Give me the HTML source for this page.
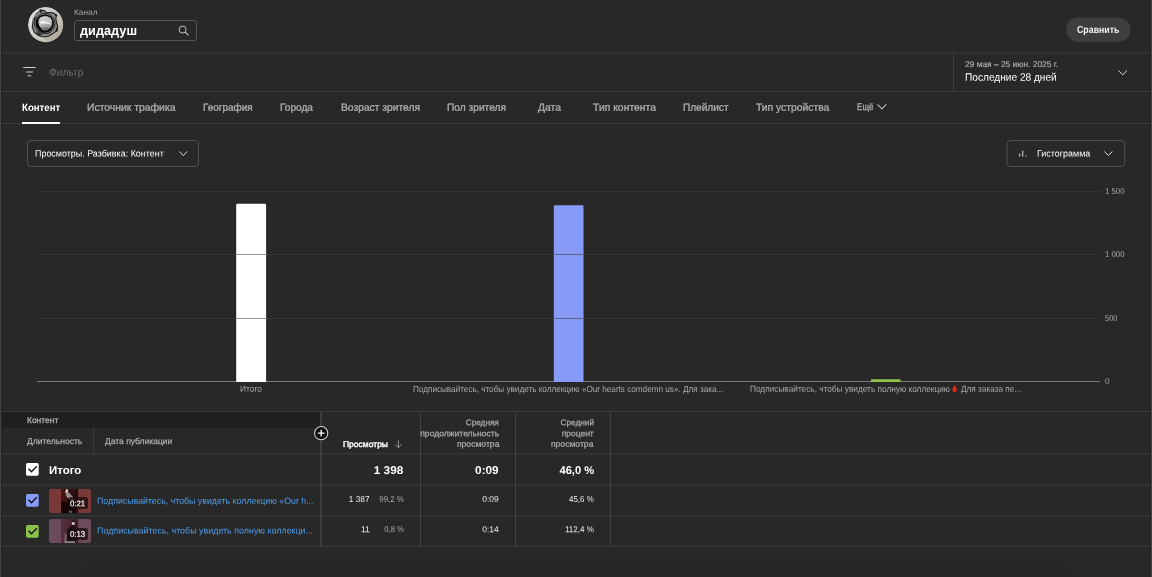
<!DOCTYPE html>
<html lang="ru">
<head>
<meta charset="utf-8">
<title>Аналитика канала</title>
<style>
html,body{margin:0;padding:0;background:#282828;}
#page{will-change:transform;position:relative;width:1152px;height:577px;overflow:hidden;background:#282828;font-family:"Liberation Sans",sans-serif;}
#page *{box-sizing:border-box;}
.t{position:absolute;white-space:pre;line-height:1;font-family:"Liberation Sans",sans-serif;}
.a{position:absolute;}
.hl{position:absolute;height:1px;background:#3c3c3c;}
.vl{position:absolute;width:1px;background:#3c3c3c;}
.box{position:absolute;border:1px solid #505050;border-radius:4px;}
svg{position:absolute;overflow:visible;}

</style>
</head>
<body>
<div id="page">
<!-- edge strips -->
<div class="a" style="left:0;top:0;width:1px;height:577px;background:#444"></div>
<div class="a" style="left:1px;top:0;width:1px;height:577px;background:#252525"></div>
<div class="a" style="left:1150px;top:0;width:1px;height:577px;background:#252525"></div>
<div class="a" style="left:1151px;top:0;width:1px;height:577px;background:#444"></div>
<!-- bottom shade -->
<div class="a" style="left:78px;top:562px;width:996px;height:30px;border-radius:60px 60px 0 0 / 18px 18px 0 0;background:linear-gradient(#262626,#242424);filter:blur(3px)"></div>

<!-- header -->
<svg style="left:27.5px;top:6.8px" width="35.4" height="35.4" viewBox="0 0 35.6 35.6">
  <defs>
    <linearGradient id="avbg" x1="0" y1="0.2" x2="1" y2="0.9">
      <stop offset="0" stop-color="#e4e4e8"/><stop offset="0.35" stop-color="#cfcdc9"/><stop offset="0.7" stop-color="#c2beb5"/><stop offset="1" stop-color="#a9a196"/>
    </linearGradient>
    <linearGradient id="avc" x1="0" y1="0" x2="0.3" y2="1">
      <stop offset="0" stop-color="#cfcfcf"/><stop offset="0.55" stop-color="#c4c4c4"/><stop offset="1" stop-color="#7e7c7a"/>
    </linearGradient>
    <clipPath id="avclip"><circle cx="17.8" cy="17.8" r="17.8"/></clipPath>
    <filter id="avblur" x="-10%" y="-10%" width="120%" height="120%"><feGaussianBlur stdDeviation="0.45"/></filter>
  </defs>
  <g clip-path="url(#avclip)">
    <circle cx="17.8" cy="17.8" r="17.8" fill="url(#avbg)"/>
    <g filter="url(#avblur)">
      <path d="M12.3 2.8 L16.2 3.5 L18.2 5.2 L25.2 5.9 L28.7 8 L28 11.5 L28.7 15.7 L30 20.5 L28.7 24 L25.2 26.8 L21.7 28.9 L17.5 30.2 L12.7 29.5 L9.9 28.2 L6.4 25.4 L4.3 20.5 L5 15.7 L4.3 11.5 L7.1 7.3 L10.6 4.5 Z" fill="#8a8884" stroke="#1e1e1e" stroke-width="1.1" stroke-linejoin="round"/>
      <path d="M12.3 2.8 L15 4.6 L12 6 Z M26.5 6.5 L30 8.6 L27.5 9.6 Z M28.5 20 L30.5 24.5 L27.5 25 Z M8 24 L11 29 L14.5 28 L10 25.5 Z M5.5 12 L8 9 L7 15 Z" fill="#1a1a1a"/>
      <path d="M7 16 C7 9 13 6 18 6.4 C24 7 27.5 11 27.4 17 C27.2 23 22.5 27.5 16.8 27.2 C11 27 7 22 7 16 Z" fill="#a19f9b"/>
      <circle cx="16.9" cy="16.6" r="10.3" fill="none" stroke="#222" stroke-width="1"/>
      <path d="M9.5 23 C12 27 19 28.5 23.5 25.5 C20 27 13 26 9.5 23 Z" fill="#2a2a2a"/>
      <circle cx="16.9" cy="16.5" r="8" fill="#6f6d69" stroke="#0b0b0b" stroke-width="2.6"/>
      <path d="M9.2 13 C7.5 18 10 24.5 16.5 25.3 C21 25.6 24 23 25 20 C21 23.5 14 23 11.5 17 Z" fill="#070707"/>
      <path d="M10.9 12.3 L12.6 10.2 L15.6 9.4 L19.2 9.3 L22 10.6 L24 13.2 L24.4 16.6 L23.5 19.8 L21.4 22 L19.4 23.5 L16.5 23.8 L14.2 22.9 L12.6 20.6 L11.2 18.6 L10.5 15.5 Z" fill="url(#avc)"/>
      <path d="M12 14.8 C15 13.2 19.5 14.4 23.8 17.6 C19.5 16.8 15.5 16.2 12.2 16.6 Z" fill="#f4f4f4" opacity="0.9"/>
      <path d="M13 20 C15 22.5 19 23.4 22.5 20.5 C19.5 22 15.5 21.6 13 20 Z" fill="#55534f" opacity="0.8"/>
      <path d="M2 16 C3 10 7 4.5 12 2.5 L10.5 4.5 C7 7 5 11 4.3 15 Z" fill="#f0f0f4" opacity="0.8"/>
      <path d="M17 31.5 C23 32 29 28 31.5 22 L33 26 C30 31 24 34 18 33.5 Z" fill="#b4ac9e" opacity="0.8"/>
    </g>
  </g>
</svg>
<div class="box" style="left:74px;top:20px;width:123px;height:21px;border-color:#555;border-radius:3px"></div>
<svg style="left:178px;top:25px" width="12" height="11" viewBox="0 0 12 11"><circle cx="4.6" cy="4.6" r="3.5" fill="none" stroke="#c4c4c4" stroke-width="1"/><path d="M7.2 7.2 L10.6 10.4" stroke="#c4c4c4" stroke-width="1.1"/></svg>
<svg style="left:1060px;top:10px" width="80" height="40" viewBox="0 0 80 40"><rect x="6.1" y="7.5" width="64.5" height="24.4" rx="12.2" fill="#3e3e3e"/></svg>

<div class="hl" style="left:2px;top:52px;width:1148px;background:#333333"></div>
<div class="hl" style="left:2px;top:53px;width:1148px;background:#313131"></div>
<div class="hl" style="left:2px;top:91px;width:1148px;background:#3b3b3b"></div>
<div class="hl" style="left:2px;top:123px;width:1148px;background:#3b3b3b"></div>
<!-- filter row -->
<svg style="left:23px;top:66px" width="14" height="12" viewBox="0 0 14 12"><path d="M0.25 1.5 H12.75 M3 6 H10 M4.75 9.8 H8.25" stroke="#d0d0d0" stroke-width="1"/></svg>
<div class="vl" style="left:953px;top:53px;height:38px"></div>
<svg style="left:1118px;top:70px" width="10" height="6" viewBox="0 0 10 6"><path d="M0.5 0.6 L4.75 4.8 L9 0.6" fill="none" stroke="#e0e0e0" stroke-width="1"/></svg>

<!-- tabs -->
<div class="a" style="left:21.75px;top:121.75px;width:38.25px;height:1.75px;background:#fff"></div>
<svg style="left:876.75px;top:104px" width="10" height="6" viewBox="0 0 10 6"><path d="M0.5 0.4 L4.9 4.8 L9.3 0.4" fill="none" stroke="#c8c8c8" stroke-width="1.05"/></svg>

<!-- dropdowns -->
<div class="box" style="left:27px;top:140px;width:172.25px;height:27px"></div>
<svg style="left:179.25px;top:151px" width="9" height="6" viewBox="0 0 9 6"><path d="M0.3 0.4 L4.25 4.6 L8.2 0.4" fill="none" stroke="#e0e0e0" stroke-width="1"/></svg>
<svg style="left:1000px;top:135px" width="132" height="38" viewBox="0 0 132 38"><rect x="7.1" y="5.5" width="117.6" height="26" rx="3.6" fill="none" stroke="#505050" stroke-width="1"/></svg>
<svg style="left:1019px;top:150px" width="8" height="7" viewBox="0 0 8 7"><path d="M0.75 3.6 V6.6 M3.75 0.6 V6.6 M6.75 5.4 V6.6" stroke="#d8d8d8" stroke-width="1"/></svg>
<svg style="left:1104.3px;top:151px" width="10" height="6" viewBox="0 0 10 6"><path d="M0.4 0.5 L4.4 4.4 L8.4 0.5" fill="none" stroke="#e0e0e0" stroke-width="1"/></svg>

<!-- chart -->
<div class="hl" style="left:37px;top:191px;width:1063px;background:#363636"></div>
<div class="hl" style="left:37px;top:254px;width:1063px;background:#363636"></div>
<div class="hl" style="left:37px;top:318px;width:1063px;background:#363636"></div>
<div class="hl" style="left:37px;top:381px;width:1063px;background:#787878"></div>
<svg style="left:0;top:0" width="1152" height="400" viewBox="0 0 1152 400">
  <path d="M236.2 382 V205 a1.2 1.2 0 0 1 1.2 -1.2 H264.9 a1.2 1.2 0 0 1 1.2 1.2 V382 Z" fill="#ffffff"/>
  <path d="M553.8 382 V206.5 a1.2 1.2 0 0 1 1.2 -1.2 H582.3 a1.2 1.2 0 0 1 1.2 1.2 V382 Z" fill="#889af8"/>
  <path d="M870.9 382 V380.3 a1.1 1.1 0 0 1 1.1 -1.1 H899.5 a1.1 1.1 0 0 1 1.1 1.1 V382 Z" fill="#8bc34a"/>
  <rect x="236.2" y="254" width="29.9" height="1" fill="#939393"/>
  <rect x="236.2" y="318" width="29.9" height="1" fill="#939393"/>
  <rect x="553.8" y="254" width="29.7" height="1" fill="#5c6389"/>
  <rect x="553.8" y="318" width="29.7" height="1" fill="#5c6389"/>
</svg>
<svg style="left:951.7px;top:385px" width="5.1" height="7.4" viewBox="0 0 5 7" preserveAspectRatio="none"><path d="M2.5 0 C3.4 1.8 4.7 3 4.7 4.5 A2.2 2.2 0 0 1 0.3 4.5 C0.3 3 1.6 1.8 2.5 0 Z" fill="#e5281e"/></svg>

<!-- table -->
<div class="hl" style="left:2px;top:411px;width:1148px;background:#3b3b3b"></div>
<div class="hl" style="left:2px;top:453px;width:1148px;background:#363636"></div>
<div class="hl" style="left:2px;top:454px;width:1148px;background:#2e2e2e"></div>
<div class="hl" style="left:2px;top:484px;width:1148px;background:#2e2e2e"></div>
<div class="hl" style="left:2px;top:485px;width:1148px;background:#363636"></div>
<div class="hl" style="left:2px;top:515px;width:1148px;background:#363636"></div>
<div class="hl" style="left:2px;top:516px;width:1148px;background:#2e2e2e"></div>
<div class="hl" style="left:2px;top:545px;width:1148px;background:#2e2e2e"></div>
<div class="hl" style="left:2px;top:546px;width:1148px;background:#363636"></div>
<div class="a" style="left:2px;top:412px;width:318px;height:16px;background:#1f1f1f"></div>
<div class="vl" style="left:93px;top:428px;height:25.5px"></div>
<div class="vl" style="left:320px;top:412px;height:134px;width:2px;background:#3e3e3e"></div>
<div class="vl" style="left:420px;top:412px;height:134px;background:#424242"></div>
<div class="vl" style="left:515px;top:412px;height:134px;background:#424242"></div>
<div class="vl" style="left:610px;top:412px;height:134px;background:#424242"></div>
<!-- plus -->
<svg style="left:313.6px;top:425.65px" width="14.4" height="14.4" viewBox="0 0 14.4 14.4"><circle cx="7.2" cy="7.2" r="6.6" fill="#0c0c0c" stroke="#d6d6d6" stroke-width="1.05"/><path d="M7.2 3.8 V10.6 M3.8 7.2 H10.6" stroke="#fff" stroke-width="1.35"/></svg>
<!-- sort arrow -->
<svg style="left:395px;top:440px" width="8" height="8" viewBox="0 0 8 8"><path d="M3.4 0.3 V7.5 M0.1 4.3 L3.4 7.7 L6.8 4.3" fill="none" stroke="#a8a8a8" stroke-width="0.85"/></svg>

<!-- checkboxes -->
<svg style="left:26px;top:463.45px" width="12.7" height="12.7" viewBox="0 0 12.8 12.8"><rect width="12.8" height="12.8" rx="1.6" fill="#ffffff"/><path d="M2.5 5.9 L5.5 8.9 L10.9 3.3" fill="none" stroke="#1a1a1a" stroke-width="1.45"/></svg>
<svg style="left:26px;top:494.4px" width="12.7" height="12.7" viewBox="0 0 12.8 12.8"><rect width="12.8" height="12.8" rx="1.6" fill="#889af8"/><path d="M2.5 5.9 L5.5 8.9 L10.9 3.3" fill="none" stroke="#101010" stroke-width="1.45"/></svg>
<svg style="left:26px;top:524.7px" width="12.7" height="12.7" viewBox="0 0 12.8 12.8"><rect width="12.8" height="12.8" rx="1.6" fill="#8bc34a"/><path d="M2.5 5.9 L5.5 8.9 L10.9 3.3" fill="none" stroke="#101010" stroke-width="1.45"/></svg>

<!-- thumbnails -->
<div class="a" style="left:48.5px;top:488.5px;width:42.5px;height:24.5px;border-radius:2.5px;background:#7a3939;overflow:hidden">
  <svg style="left:12.7px;top:0" width="17.2" height="24.5" viewBox="0 0 17.2 24.5">
    <defs><filter id="tb1" x="-20%" y="-20%" width="140%" height="140%"><feGaussianBlur stdDeviation="0.5"/></filter>
    <linearGradient id="tg1" x1="0" y1="0" x2="1" y2="0"><stop offset="0" stop-color="#4a1616"/><stop offset="0.35" stop-color="#3a1010"/><stop offset="1" stop-color="#240a0a"/></linearGradient></defs>
    <rect width="17.2" height="24.5" fill="url(#tg1)"/>
    <g filter="url(#tb1)">
      <path d="M0 12 L6 14 L9 24.5 L0 24.5 Z" fill="#120606"/>
      <ellipse cx="5.6" cy="2" rx="1.7" ry="2.1" fill="#d8c8c0"/>
      <path d="M4.2 3.5 L7.6 3.2 L12.5 8.5 L13 12 L8.5 11 L5.5 7.5 Z" fill="#9a8c8a"/>
      <path d="M3.2 0 L5 0 L4 3 Z" fill="#1a0a0a"/>
      <path d="M6 11 L13 12 L14 24.5 L8 24.5 Z" fill="#0e0505"/>
      <path d="M7.5 21.5 L11.5 21.8 L11 24 L8 23.6 Z" fill="#8a7a80" opacity="0.7"/>
    </g>
  </svg>
  <div class="a" style="left:19.6px;top:8.7px;width:20.4px;height:12px;border-radius:2.5px;background:rgba(28,12,12,0.78)"></div>
</div>
<div class="a" style="left:48.5px;top:519px;width:42.5px;height:24.4px;border-radius:2.5px;background:#6c4b5a;overflow:hidden">
  <svg style="left:12.7px;top:0" width="17.2" height="24.4" viewBox="0 0 17.2 24.4">
    <defs><filter id="tb2" x="-20%" y="-20%" width="140%" height="140%"><feGaussianBlur stdDeviation="0.5"/></filter>
    <linearGradient id="tg2" x1="0" y1="0" x2="1" y2="0"><stop offset="0" stop-color="#553040"/><stop offset="0.5" stop-color="#4a2636"/><stop offset="1" stop-color="#3c1e2c"/></linearGradient></defs>
    <rect width="17.2" height="24.4" fill="url(#tg2)"/>
    <g filter="url(#tb2)">
      <ellipse cx="12.3" cy="4" rx="1.6" ry="2.2" fill="#c8b4b0"/>
      <path d="M10.3 2.2 Q12.3 0.5 14.2 2.6 L14.4 5 L13.6 3 L11 3 Z" fill="#1a0c12"/>
      <path d="M9.5 6.5 L14.5 6.2 L15.5 14 L14 24.4 L5 24.4 L6 15 Z" fill="#1c0e16"/>
      <path d="M3.5 15 L6.5 14.5 L6 22 L3 22 Z" fill="#7a6670" opacity="0.7"/>
      <path d="M3.5 22.3 L14 22 L14 24.4 L3.5 24.4 Z" fill="#b0a4a8" opacity="0.75"/>
    </g>
  </svg>
  <div class="a" style="left:18.6px;top:8.5px;width:21.4px;height:12px;border-radius:2.5px;background:rgba(28,14,20,0.78)"></div>
</div>

<!-- text -->
<span class="t" style="top:8px;font-size:7.8px;color:#aaaaaa;left:74.00px;transform-origin:left 6.00px;transform:translateY(0.80px) rotate(0.03deg) scaleX(1.0644);">Канал</span>
<span class="t" style="top:24px;font-size:13.4px;color:#fff;font-weight:700;left:80.20px;transform-origin:left 11.00px;transform:translateY(-0.10px) rotate(0.03deg) scaleX(0.9507);">дидадуш</span>
<span class="t" style="top:25px;font-size:10.2px;color:#f2f2f2;font-weight:700;left:1077.00px;transform-origin:left 8.00px;transform:translateY(0.25px) rotate(0.03deg) scaleX(0.8640);">Сравнить</span>
<span class="t" style="top:67px;font-size:10.6px;color:#6f6f6f;left:48.60px;transform-origin:left 8.98px;transform:translateY(-0.23px) rotate(0.03deg) scaleX(0.9665);">Фильтр</span>
<span class="t" style="top:60px;font-size:8.4px;color:#aaaaaa;left:964.75px;transform-origin:left 6.98px;transform:translateY(-0.08px) rotate(0.03deg);-webkit-text-stroke:0.2px #aaaaaa;">29 мая – 25 июн. 2025 г.</span>
<span class="t" style="top:72px;font-size:10.8px;color:#fff;left:964.75px;transform-origin:left 8.99px;transform:translateY(-0.19px) rotate(0.03deg) scaleX(0.9377);">Последние 28 дней</span>
<span class="t" style="top:102px;font-size:10.4px;color:#fff;font-weight:700;left:21.75px;transform-origin:left 8.00px;transform:translateY(0.75px) rotate(0.03deg) scaleX(0.9283);">Контент</span>
<span class="t" style="top:102px;font-size:10.4px;color:#aaaaaa;left:87.25px;transform-origin:left 7.98px;transform:translateY(0.77px) rotate(0.03deg);-webkit-text-stroke:0.35px #aaaaaa;">Источник трафика</span>
<span class="t" style="top:102px;font-size:10.4px;color:#aaaaaa;left:203.00px;transform-origin:left 7.98px;transform:translateY(0.77px) rotate(0.03deg) scaleX(0.9599);-webkit-text-stroke:0.35px #aaaaaa;">География</span>
<span class="t" style="top:102px;font-size:10.4px;color:#aaaaaa;left:280.00px;transform-origin:left 7.98px;transform:translateY(0.77px) rotate(0.03deg) scaleX(0.9737);-webkit-text-stroke:0.35px #aaaaaa;">Города</span>
<span class="t" style="top:102px;font-size:10.4px;color:#aaaaaa;left:340.50px;transform-origin:left 7.98px;transform:translateY(0.77px) rotate(0.03deg) scaleX(0.9890);-webkit-text-stroke:0.35px #aaaaaa;">Возраст зрителя</span>
<span class="t" style="top:102px;font-size:10.4px;color:#aaaaaa;left:447.00px;transform-origin:left 7.98px;transform:translateY(0.77px) rotate(0.03deg) scaleX(0.9818);-webkit-text-stroke:0.35px #aaaaaa;">Пол зрителя</span>
<span class="t" style="top:102px;font-size:10.4px;color:#aaaaaa;left:537.50px;transform-origin:left 7.98px;transform:translateY(0.77px) rotate(0.03deg);-webkit-text-stroke:0.35px #aaaaaa;">Дата</span>
<span class="t" style="top:102px;font-size:10.4px;color:#aaaaaa;left:592.50px;transform-origin:left 7.98px;transform:translateY(0.77px) rotate(0.03deg);-webkit-text-stroke:0.35px #aaaaaa;">Тип контента</span>
<span class="t" style="top:102px;font-size:10.4px;color:#aaaaaa;left:682.50px;transform-origin:left 7.98px;transform:translateY(0.77px) rotate(0.03deg) scaleX(0.9694);-webkit-text-stroke:0.35px #aaaaaa;">Плейлист</span>
<span class="t" style="top:102px;font-size:10.4px;color:#aaaaaa;left:755.50px;transform-origin:left 7.98px;transform:translateY(0.77px) rotate(0.03deg) scaleX(0.9932);-webkit-text-stroke:0.35px #aaaaaa;">Тип устройства</span>
<span class="t" style="top:102px;font-size:9.8px;color:#b4b4b4;left:856.80px;transform-origin:left 7.99px;transform:translateY(0.11px) rotate(0.03deg) scaleX(0.8231);-webkit-text-stroke:0.25px #b4b4b4;">Ещё</span>
<span class="t" style="top:149px;font-size:9.1px;color:#fff;left:35.00px;transform-origin:left 7.00px;transform:translateY(0.50px) rotate(0.03deg) scaleX(0.9828);">Просмотры. Разбивка: Контент</span>
<span class="t" style="top:149px;font-size:9.1px;color:#fff;left:1036.50px;transform-origin:left 7.00px;transform:translateY(0.50px) rotate(0.03deg) scaleX(0.9833);">Гистограмма</span>
<span class="t" style="top:187px;font-size:8.4px;color:#ababab;left:1104.50px;transform-origin:left 6.98px;transform:translateY(0.12px) rotate(0.03deg) scaleX(0.9300);">1 500</span>
<span class="t" style="top:250px;font-size:8.4px;color:#ababab;left:1104.50px;transform-origin:left 6.98px;transform:translateY(0.22px) rotate(0.03deg) scaleX(0.9300);">1 000</span>
<span class="t" style="top:314px;font-size:8.4px;color:#ababab;left:1104.50px;transform-origin:left 6.98px;transform:translateY(-0.08px) rotate(0.03deg) scaleX(0.8939);">500</span>
<span class="t" style="top:377px;font-size:8.4px;color:#ababab;left:1104.50px;transform-origin:left 6.98px;transform:translateY(0.12px) rotate(0.03deg);">0</span>
<span class="t" style="top:384px;font-size:8.8px;color:#aaaaaa;left:240.00px;transform-origin:left 6.99px;transform:translateY(0.81px) rotate(0.03deg) scaleX(0.9539);">Итого</span>
<span class="t" style="top:384px;font-size:8.8px;color:#aaaaaa;left:413.00px;transform-origin:left 6.99px;transform:translateY(0.81px) rotate(0.03deg) scaleX(0.9267);">Подписывайтесь, чтобы увидеть коллекцию «Our hearts comdemn us». Для зака...</span>
<span class="t" style="top:384px;font-size:8.8px;color:#aaaaaa;left:750.00px;transform-origin:left 6.99px;transform:translateY(0.81px) rotate(0.03deg) scaleX(0.9402);">Подписывайтесь, чтобы увидеть полную коллекцию</span>
<span class="t" style="top:384px;font-size:8.8px;color:#aaaaaa;left:961.20px;transform-origin:left 6.99px;transform:translateY(0.81px) rotate(0.03deg) scaleX(0.9352);">Для заказа пе...</span>
<span class="t" style="top:416px;font-size:8.4px;color:#b8b8b8;left:27.00px;transform-origin:left 6.98px;transform:translateY(0.02px) rotate(0.03deg) scaleX(1.0070);-webkit-text-stroke:0.25px #b8b8b8;">Контент</span>
<span class="t" style="top:437px;font-size:8.4px;color:#aaaaaa;left:27.00px;transform-origin:left 6.98px;transform:translateY(0.02px) rotate(0.03deg) scaleX(1.0178);-webkit-text-stroke:0.25px #aaaaaa;">Длительность</span>
<span class="t" style="top:437px;font-size:8.4px;color:#aaaaaa;left:104.75px;transform-origin:left 6.98px;transform:translateY(0.02px) rotate(0.03deg) scaleX(1.0137);-webkit-text-stroke:0.25px #aaaaaa;">Дата публикации</span>
<span class="t" style="top:440px;font-size:8.4px;color:#f4f4f4;left:342.50px;transform-origin:left 6.98px;transform:translateY(0.02px) rotate(0.03deg) scaleX(1.0162);-webkit-text-stroke:0.45px #f4f4f4;">Просмотры</span>
<span class="t" style="top:418px;font-size:8.4px;color:#aaaaaa;right:653.00px;transform-origin:right 6.98px;transform:translateY(0.32px) rotate(0.03deg) scaleX(0.9773);-webkit-text-stroke:0.25px #aaaaaa;">Средняя</span>
<span class="t" style="top:429px;font-size:8.4px;color:#aaaaaa;right:653.00px;transform-origin:right 6.98px;transform:translateY(0.22px) rotate(0.03deg) scaleX(1.0229);-webkit-text-stroke:0.25px #aaaaaa;">продолжительность</span>
<span class="t" style="top:440px;font-size:8.4px;color:#aaaaaa;right:653.00px;transform-origin:right 6.98px;transform:translateY(-0.18px) rotate(0.03deg) scaleX(1.0260);-webkit-text-stroke:0.25px #aaaaaa;">просмотра</span>
<span class="t" style="top:418px;font-size:8.4px;color:#aaaaaa;right:558.25px;transform-origin:right 6.98px;transform:translateY(0.32px) rotate(0.03deg) scaleX(0.9835);-webkit-text-stroke:0.25px #aaaaaa;">Средний</span>
<span class="t" style="top:429px;font-size:8.4px;color:#aaaaaa;right:558.25px;transform-origin:right 6.98px;transform:translateY(0.22px) rotate(0.03deg) scaleX(1.0099);-webkit-text-stroke:0.25px #aaaaaa;">процент</span>
<span class="t" style="top:440px;font-size:8.4px;color:#aaaaaa;right:558.25px;transform-origin:right 6.98px;transform:translateY(-0.18px) rotate(0.03deg) scaleX(1.0260);-webkit-text-stroke:0.25px #aaaaaa;">просмотра</span>
<span class="t" style="top:464px;font-size:11.3px;color:#fff;font-weight:700;left:48.75px;transform-origin:left 9.00px;transform:translateY(0.90px) rotate(0.03deg) scaleX(1.0118);">Итого</span>
<span class="t" style="top:464px;font-size:11.3px;color:#fff;font-weight:700;right:748.25px;transform-origin:right 9.00px;transform:translateY(0.90px) rotate(0.03deg) scaleX(1.0431);">1 398</span>
<span class="t" style="top:464px;font-size:11.3px;color:#fff;font-weight:700;right:653.25px;transform-origin:right 9.00px;transform:translateY(0.90px) rotate(0.03deg) scaleX(1.0387);">0:09</span>
<span class="t" style="top:464px;font-size:11.3px;color:#fff;font-weight:700;right:558.25px;transform-origin:right 9.00px;transform:translateY(0.90px) rotate(0.03deg) scaleX(0.9880);">46,0 %</span>
<span class="t" style="top:496px;font-size:8.8px;color:#4f9eec;left:96.75px;transform-origin:left 6.99px;transform:translateY(0.71px) rotate(0.03deg);">Подписывайтесь, чтобы увидеть коллекцию «Our h...</span>
<span class="t" style="top:495px;font-size:8.6px;color:#e8e8e8;right:782.00px;transform-origin:right 6.98px;transform:translateY(0.02px) rotate(0.03deg) scaleX(0.9644);">1 387</span>
<span class="t" style="top:495px;font-size:8.6px;color:#aaaaaa;right:748.25px;transform-origin:right 6.98px;transform:translateY(0.02px) rotate(0.03deg) scaleX(0.9154);">99,2 %</span>
<span class="t" style="top:495px;font-size:8.6px;color:#e8e8e8;right:653.25px;transform-origin:right 6.98px;transform:translateY(0.02px) rotate(0.03deg) scaleX(0.9860);">0:09</span>
<span class="t" style="top:495px;font-size:8.6px;color:#e8e8e8;right:558.25px;transform-origin:right 6.98px;transform:translateY(0.02px) rotate(0.03deg) scaleX(0.9247);">45,6 %</span>
<span class="t" style="top:526px;font-size:8.8px;color:#4f9eec;left:96.75px;transform-origin:left 6.99px;transform:translateY(0.41px) rotate(0.03deg) scaleX(1.0119);">Подписывайтесь, чтобы увидеть полную коллекци...</span>
<span class="t" style="top:525px;font-size:8.6px;color:#e8e8e8;right:782.00px;transform-origin:right 6.98px;transform:translateY(0.27px) rotate(0.03deg) scaleX(1.0088);">11</span>
<span class="t" style="top:525px;font-size:8.6px;color:#aaaaaa;right:748.25px;transform-origin:right 6.98px;transform:translateY(0.27px) rotate(0.03deg) scaleX(0.8984);">0,8 %</span>
<span class="t" style="top:525px;font-size:8.6px;color:#e8e8e8;right:653.25px;transform-origin:right 6.98px;transform:translateY(0.27px) rotate(0.03deg) scaleX(0.9860);">0:14</span>
<span class="t" style="top:525px;font-size:8.6px;color:#e8e8e8;right:558.25px;transform-origin:right 6.98px;transform:translateY(0.27px) rotate(0.03deg) scaleX(0.9383);">112,4 %</span>
<span class="t" style="top:499px;font-size:8.2px;color:#fff;left:69.60px;transform-origin:left 6.00px;transform:translateY(1.30px) rotate(0.03deg) scaleX(0.9537);-webkit-text-stroke:0.15px #fff;">0:21</span>
<span class="t" style="top:530px;font-size:8.2px;color:#fff;left:69.60px;transform-origin:left 6.00px;transform:translateY(0.70px) rotate(0.03deg) scaleX(0.9537);-webkit-text-stroke:0.15px #fff;">0:13</span>
</div>
</body>
</html>
